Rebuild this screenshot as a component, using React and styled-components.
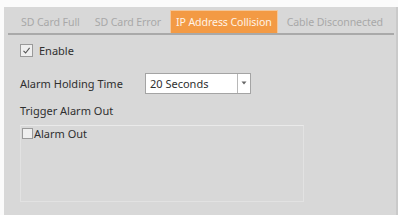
import styled, { createGlobalStyle } from 'styled-components';

const Global = createGlobalStyle`
    html, body {
        margin: 0;
        padding: 0;
        background: #ffffff;
    }
    body {
        font-family: "Noto Sans", "Open Sans", sans-serif;
    }
`;

const Page = styled.div`
    width: 398px;
    height: 215px;
    box-sizing: border-box;
    padding: 7px 0 0 4px;
    background: #fbfbfb;
`;

const Panel = styled.div`
    height: 208px;
    box-sizing: border-box;
    background: #d8d8d8;
    border-right: 2px solid #cacaca;
    padding: 3px 0 0 4px;
`;

const TabBar = styled.div`
    display: flex;
    align-items: stretch;
    gap: 3px;
    height: 23px;
    border-bottom: 2px solid #a9a9a9;
    margin-right: 2px;
    padding-left: 7px;
    overflow: hidden;
`;

const Tab = styled.div`
    display: flex;
    align-items: center;
    padding: 0 5px;
    font-size: 10.6px;
    letter-spacing: -0.1px;
    color: ${p => (p.$active ? '#fff3e6' : '#a8a8a8')};
    background: ${p => (p.$active ? '#f39a44' : 'transparent')};
    border: 1px solid ${p => (p.$active ? '#f2c79c' : 'transparent')};
    border-bottom: none;
    white-space: nowrap;
`;

const Body = styled.div`
    padding: 7px 0 0 12px;
    font-size: 11px;
    color: #2f2f2f;
`;

const CheckRow = styled.label`
    display: flex;
    align-items: center;
    gap: 6px;
    height: 16px;
`;

const Box = styled.span`
    width: ${p => p.$size || 12}px;
    height: ${p => p.$size || 12}px;
    box-sizing: border-box;
    border: 1px solid #9a9a9a;
    background: #efefef;
    display: flex;
    align-items: center;
    justify-content: center;
`;

const FieldRow = styled.div`
    display: flex;
    align-items: center;
    margin-top: 15px;
    height: 20px;
`;

const FieldLabel = styled.span`
    width: 125px;
`;

const Select = styled.div`
    width: 106px;
    height: 21px;
    box-sizing: border-box;
    border: 1px solid #a4a4a4;
    background: #ffffff;
    display: flex;
    align-items: center;
    padding-left: 4px;
    font-size: 11px;
`;

const SelectText = styled.span`
    flex: 1;
`;

const Arrow = styled.span`
    width: 12px;
    height: 19px;
    border-left: 1px solid #b8b8b8;
    display: flex;
    align-items: center;
    justify-content: center;
`;

const Heading = styled.div`
    margin-top: 10px;
    height: 16px;
`;

const OutBox = styled.div`
    margin-top: 6px;
    width: 284px;
    height: 77px;
    box-sizing: border-box;
    border: 1px solid #e2e2e2;
    border-top-color: #eaeaea;
    padding: 0 0 0 1px;
`;

const OutRow = styled.label`
    display: flex;
    align-items: center;
    gap: 1px;
    height: 14px;
`;

export default function App() {
    return (
        <>
            <Global />
            <Page>
                <Panel>
                    <TabBar>
                        <Tab>SD Card Full</Tab>
                        <Tab>SD Card Error</Tab>
                        <Tab $active>IP Address Collision</Tab>
                        <Tab>Cable Disconnected</Tab>
                    </TabBar>
                    <Body>
                        <CheckRow>
                            <Box $size={13}>
                                <svg width="9" height="9" viewBox="0 0 9 9">
                                    <path d="M1.5 4.8 L3.6 7 L7.6 1.8" fill="none" stroke="#555" strokeWidth="1.1" />
                                </svg>
                            </Box>
                            Enable
                        </CheckRow>
                        <FieldRow>
                            <FieldLabel>Alarm Holding Time</FieldLabel>
                            <Select>
                                <SelectText>20 Seconds</SelectText>
                                <Arrow>
                                    <svg width="6" height="4" viewBox="0 0 6 4">
                                        <path d="M0.5 0.5 L3 3.5 L5.5 0.5 Z" fill="#666" />
                                    </svg>
                                </Arrow>
                            </Select>
                        </FieldRow>
                        <Heading>Trigger Alarm Out</Heading>
                        <OutBox>
                            <OutRow>
                                <Box $size={11} />
                                Alarm Out
                            </OutRow>
                        </OutBox>
                    </Body>
                </Panel>
            </Page>
        </>
    );
}
